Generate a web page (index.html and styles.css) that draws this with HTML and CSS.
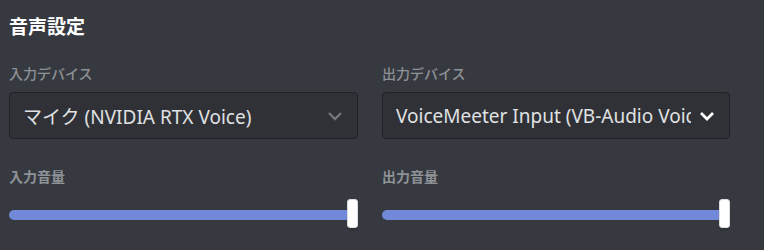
FILE: index.html
```html
<!DOCTYPE html>
<html lang="ja">

<head>
    <meta charset="UTF-8">
    <meta name="viewport" content="width=device-width, initial-scale=1.0">
    <title>音声設定</title>
    <link rel="stylesheet" href="styles.css">
</head>

<body>
    <div class="panel">
        <h2 class="title">音声設定</h2>
        <div class="grid">
            <div class="field">
                <div class="label">入力デバイス</div>
                <div class="select">
                    <span class="value">マイク (NVIDIA RTX Voice)</span>
                    <svg class="chevron dim" width="16" height="10" viewBox="0 0 16 10">
                        <path d="M2 2 L8 8 L14 2" fill="none" stroke="currentColor" stroke-width="2.4" />
                    </svg>
                </div>
            </div>
            <div class="field">
                <div class="label">出力デバイス</div>
                <div class="select">
                    <span class="value">VoiceMeeter Input (VB-Audio VoiceMeeter VAIO)</span>
                    <svg class="chevron" width="16" height="10" viewBox="0 0 16 10">
                        <path d="M2 2 L8 8 L14 2" fill="none" stroke="currentColor" stroke-width="2.8" />
                    </svg>
                </div>
            </div>
            <div class="field">
                <div class="label vol">入力音量</div>
                <div class="slider">
                    <div class="track"></div>
                    <div class="thumb"></div>
                </div>
            </div>
            <div class="field">
                <div class="label vol">出力音量</div>
                <div class="slider">
                    <div class="track"></div>
                    <div class="thumb"></div>
                </div>
            </div>
        </div>
    </div>
</body>

</html>
```

FILE: styles.css
```css
* {
    box-sizing: border-box;
}

body {
    margin: 0;
    background: #36393f;
    font-family: "Noto Sans", "Noto Sans CJK JP", sans-serif;
    color: #dcddde;
}

.panel {
    padding: 15px 9px 0 9px;
}

.title {
    margin: 0;
    font-size: 19px;
    line-height: 24px;
    font-weight: 700;
    color: #fff;
}

.grid {
    display: grid;
    grid-template-columns: 349px 348px;
    column-gap: 24px;
    margin-top: 26px;
}

.label {
    font-size: 14px;
    line-height: 18px;
    font-weight: 500;
    color: #8e9297;
    margin-bottom: 9px;
}

.label.vol {
    margin-top: 29px;
    font-weight: 700;
    margin-bottom: 0;
}

.select {
    height: 47px;
    background: #2f3136;
    border: 1px solid #202225;
    border-radius: 4px;
    display: flex;
    align-items: center;
    padding: 0 14px 0 13px;
}

.value {
    flex: 1;
    font-size: 19px;
    color: #e0e1e3;
    white-space: nowrap;
    overflow: hidden;
    margin-right: 2px;
}

.chevron {
    color: #fff;
    flex: none;
    margin-left: 6px;
}

.chevron.dim {
    color: #72767d;
}

.slider {
    position: relative;
    height: 45px;
}

.track {
    position: absolute;
    left: 0;
    right: 6px;
    top: 24px;
    height: 10px;
    background: #7289da;
    border-radius: 5px;
}

.thumb {
    position: absolute;
    right: 0;
    top: 13px;
    width: 11px;
    height: 29px;
    background: #fff;
    border: 1px solid #dcddde;
    border-radius: 3px;
    box-shadow: 0 3px 1px rgba(0, 0, 0, 0.1);
}
```
